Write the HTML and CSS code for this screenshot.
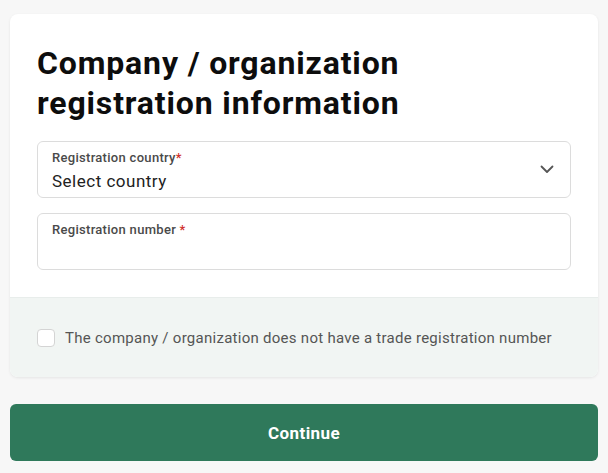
FILE: index.html
```html
<!DOCTYPE html>
<html lang="en">
<head>
<meta charset="utf-8">
<title>Company registration</title>
<link rel="stylesheet" href="styles.css">
</head>
<body>
<main class="page">
  <section class="card">
    <div class="card-body">
      <h1 class="title">Company / organization registration information</h1>
      <div class="field field-select">
        <div class="field-text">
          <span class="field-label">Registration country<span class="req">*</span></span>
          <span class="field-value">Select country</span>
        </div>
        <svg class="chevron" width="14" height="9" viewBox="0 0 14 9" aria-hidden="true">
          <path d="M1.5 1.5 L7 7 L12.5 1.5" fill="none" stroke="#555" stroke-width="1.8" stroke-linecap="round" stroke-linejoin="round"/>
        </svg>
      </div>
      <div class="field">
        <div class="field-text">
          <span class="field-label">Registration number <span class="req">*</span></span>
        </div>
      </div>
    </div>
    <div class="card-footer">
      <label class="check">
        <span class="box"></span>
        <span class="check-text">The company / organization does not have a trade registration number</span>
      </label>
    </div>
  </section>
  <button class="btn" type="button">Continue</button>
</main>
</body>
</html>
```

FILE: styles.css
```css
html, body {
  margin: 0;
  padding: 0;
  background: #f7f7f7;
}
body {
  font-family: Roboto, "Liberation Sans", sans-serif;
  color: #1a1a1a;
}
.page {
  padding: 14px 10px 0 10px;
  display: flex;
  flex-direction: column;
  gap: 27px;
}
.card {
  background: #fff;
  border-radius: 8px;
  box-shadow: 0 1px 3px rgba(0,0,0,0.08);
  overflow: hidden;
}
.card-body {
  padding: 29px 27px 27px 27px;
  display: flex;
  flex-direction: column;
  gap: 15px;
}
.title {
  margin: 0 0 3px 0;
  font-size: 32px;
  line-height: 40px;
  font-weight: 700;
  color: #0d0d0d;
  letter-spacing: 0.85px;
}
.field {
  border: 1px solid #dcdcdc;
  border-radius: 6px;
  display: flex;
  align-items: center;
  padding: 0 14px;
  box-sizing: border-box;
  height: 57px;
}
.field-text {
  flex: 1;
  display: flex;
  flex-direction: column;
  align-self: flex-start;
  padding-top: 8px;
}
.field-label {
  font-size: 13px;
  line-height: 16px;
  font-weight: 500;
  color: #4a4a4a;
  letter-spacing: 0.3px;
}
.req {
  color: #d0312d;
}
.field-value {
  margin-top: 3px;
  font-size: 17px;
  line-height: 24px;
  color: #222;
  letter-spacing: 0.5px;
}
.chevron {
  margin-right: 2px;
}
.card-footer {
  background: #f1f5f3;
  border-top: 1px solid #e8edeb;
  height: 79px;
  display: flex;
  align-items: center;
  padding: 0 27px;
}
.check {
  display: flex;
  align-items: center;
  gap: 10px;
}
.box {
  width: 18px;
  height: 18px;
  border: 1px solid #d4d4d4;
  border-radius: 4px;
  background: #fff;
  box-sizing: border-box;
}
.check-text {
  font-size: 15px;
  color: #555;
  letter-spacing: 0.27px;
}
.btn {
  height: 57px;
  border: none;
  border-radius: 6px;
  background: #2f795b;
  color: #fff;
  font-family: Roboto, "Liberation Sans", sans-serif;
  font-size: 17px;
  font-weight: 700;
  letter-spacing: 0.4px;
}
```
